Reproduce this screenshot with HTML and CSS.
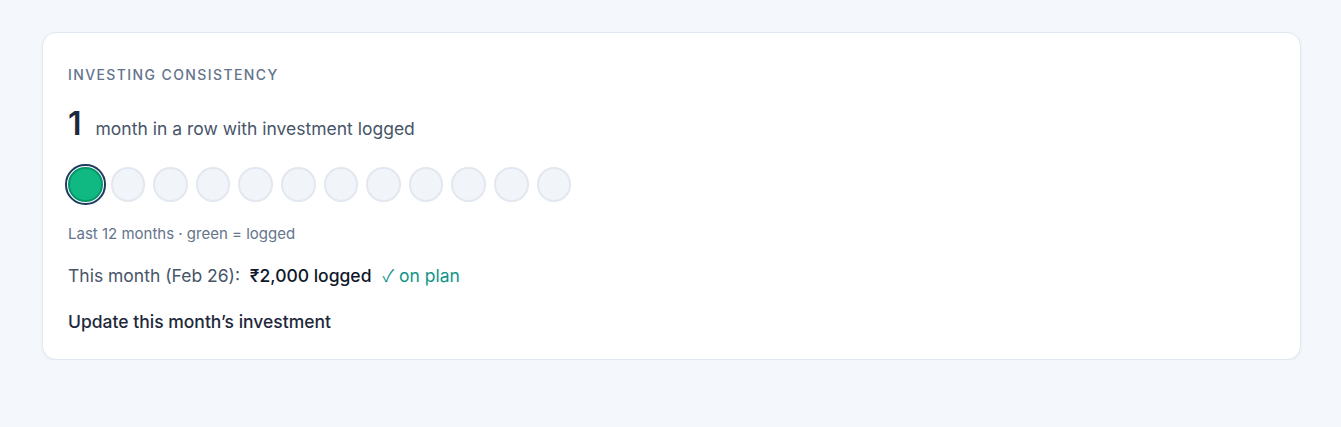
FILE: index.html
```html
<!DOCTYPE html>
<html lang="en">
<head>
    <meta charset="UTF-8">
    <meta name="viewport" content="width=device-width, initial-scale=1.0">
    <title>Investing consistency</title>
    <link rel="stylesheet" href="styles.css">
</head>
<body>
    <section class="card">
        <h2 class="card-title">Investing consistency</h2>

        <p class="streak">
            <span class="streak-count">1</span>
            <span class="streak-label">month in a row with investment logged</span>
        </p>

        <div class="dots">
            <span class="dot logged current"></span>
            <span class="dot"></span>
            <span class="dot"></span>
            <span class="dot"></span>
            <span class="dot"></span>
            <span class="dot"></span>
            <span class="dot"></span>
            <span class="dot"></span>
            <span class="dot"></span>
            <span class="dot"></span>
            <span class="dot"></span>
            <span class="dot"></span>
        </div>

        <p class="hint">Last 12 months · green = logged</p>

        <p class="this-month">
            This month (Feb 26):&nbsp;
            <strong class="amount">₹2,000 logged</strong>
            <span class="status"><span class="check">✓</span> on plan</span>
        </p>

        <a class="update-link" href="#">Update this month’s investment</a>
    </section>
</body>
</html>
```

FILE: styles.css
```css
body {
    margin: 0;
    padding: 32px 40px 0 42px;
    background-color: #f4f7fb;
    font-family: Inter, "Noto Sans", sans-serif;
    color: #0f172a;
}
.card {
    background-color: #fff;
    border: 1px solid #e2e8f0;
    border-radius: 14px;
    box-shadow: 0 1px 3px rgba(15, 23, 42, 0.05);
    padding: 32px 25px 27px;
}
.card-title {
    margin: 0;
    font-size: 14px;
    font-weight: 500;
    letter-spacing: 0.1em;
    text-transform: uppercase;
    color: #64748b;
    line-height: 20px;
}
.streak {
    display: flex;
    align-items: baseline;
    gap: 14px;
    margin: 20px 0 0;
}
.streak-count {
    font-size: 32px;
    font-weight: 600;
    color: #1e293b;
    line-height: 38px;
}
.streak-label {
    font-size: 17.5px;
    color: #475569;
}
.dots {
    display: flex;
    gap: 8px;
    margin-top: 21px;
    padding: 3px 0;
}
.dot {
    width: 34.6px;
    height: 34.6px;
    box-sizing: border-box;
    border-radius: 50%;
    border: 2px solid #e2e8f0;
    background-color: #f1f5f9;
}
.dot.logged {
    background-color: #10b981;
    border-color: #059669;
}
.dot.current {
    outline: 2px solid #1e3a5f;
    outline-offset: 1px;
}
.hint {
    margin: 19px 0 0;
    font-size: 15px;
    color: #64748b;
}
.this-month {
    margin: 22px 0 0;
    font-size: 17.5px;
    line-height: 21px;
    color: #475569;
}
.amount {
    font-weight: 500;
    color: #0f172a;
}
.status {
    margin-left: 6px;
    color: #0f9488;
}
.check {
    font-family: "Noto Sans CJK SC", "DejaVu Sans", sans-serif;
    font-size: 17px;
    line-height: 1;
}
.update-link {
    display: inline-block;
    margin-top: 25px;
    font-size: 17.5px;
    font-weight: 500;
    color: #1e293b;
    text-decoration: none;
}
```
